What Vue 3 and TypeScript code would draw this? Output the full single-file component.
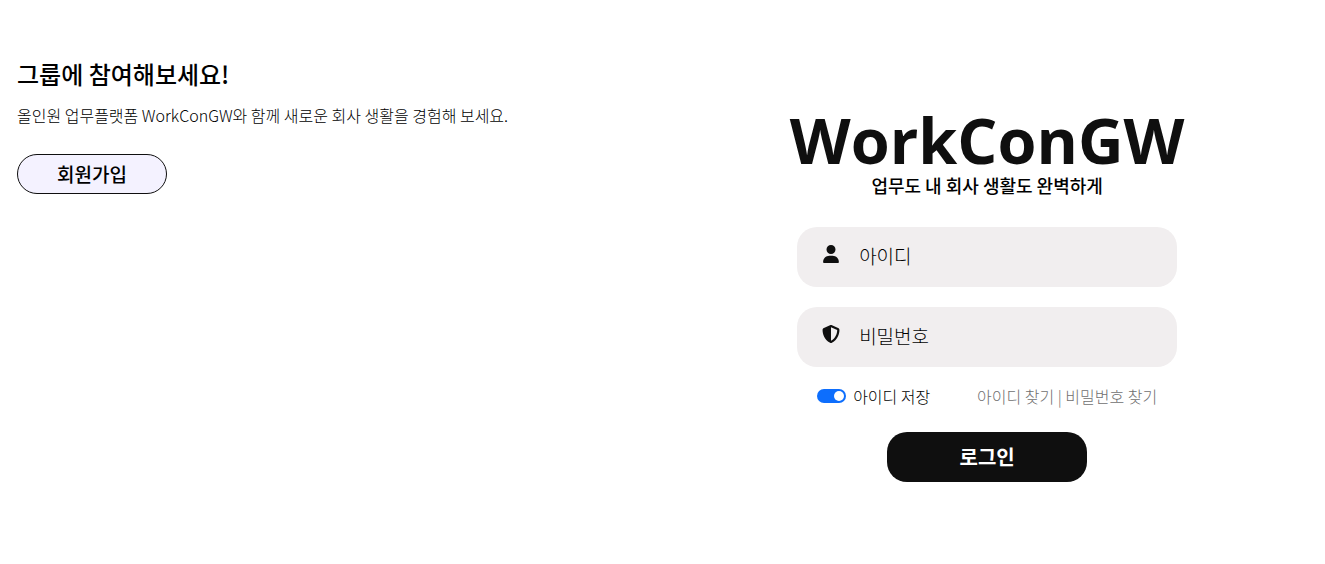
<script setup lang="ts">
import { ref } from 'vue'

const userId = ref('')
const password = ref('')
const rememberId = ref(true)
</script>

<template>
  <main class="page">
    <section class="join">
      <h2 class="join-title">그룹에 참여해보세요!</h2>
      <p class="join-text">올인원 업무플랫폼 WorkConGW와 함께 새로운 회사 생활을 경험해 보세요.</p>
      <button class="join-button" type="button">회원가입</button>
    </section>

    <form class="login" @submit.prevent>
      <h1 class="brand">WorkConGW</h1>
      <p class="tagline">업무도 내 회사 생활도 완벽하게</p>

      <div class="field">
        <label class="field-icon" for="user-id" aria-label="아이디">
          <svg viewBox="0 0 448 512" width="16" height="18" aria-hidden="true">
            <path d="M224 256A128 128 0 1 0 224 0a128 128 0 0 0 0 256zm-45.700 48C79.800 304 0 383.800 0 482.300 0 498.700 13.300 512 29.700 512h388.600c16.400 0 29.700-13.300 29.700-29.700C448 383.800 368.200 304 269.700 304z" />
          </svg>
        </label>
        <input id="user-id" v-model="userId" type="text" placeholder="아이디" />
      </div>

      <div class="field">
        <label class="field-icon" for="password" aria-label="비밀번호">
          <svg viewBox="0 0 512 512" width="18" height="18" aria-hidden="true">
            <path d="M256 0c4.600 0 9.200 1 13.400 2.900l188.300 79.900c22 9.300 38.400 31 38.300 57.200-.5 99.200-41.300 280.700-213.600 363.200-16.700 8-36.100 8-52.800 0C57.300 420.700 16.500 239.200 16 140c-.1-26.200 16.300-47.900 38.300-57.200L242.700 2.900C246.800 1 251.400 0 256 0zm0 66.800v378.100C394 378 431.100 230.100 432 141.400L256 66.800z" />
          </svg>
        </label>
        <input id="password" v-model="password" type="password" placeholder="비밀번호" />
      </div>

      <div class="options">
        <label class="remember" for="remember">
          <input id="remember" v-model="rememberId" class="switch" type="checkbox" role="switch" />
          <span>아이디 저장</span>
        </label>
        <nav class="find">
          <a href="#find-id">아이디 찾기</a> | <a href="#find-password">비밀번호 찾기</a>
        </nav>
      </div>

      <button class="login-button" type="submit">로그인</button>
    </form>
  </main>
</template>

<style>
body {
  margin: 0;
  background: #fff;
}
</style>

<style scoped>
.page {
  display: grid;
  grid-template-columns: 49fr 51fr;
  font-family: "Noto Sans CJK KR", sans-serif;
  font-size: 16px;
  font-weight: 300;
  line-height: 24px;
  color: #000;
}

h1,
h2,
p {
  margin: 0;
}

button,
input {
  box-sizing: border-box;
  font-family: inherit;
  color: inherit;
}

button {
  cursor: pointer;
}

.join {
  display: flex;
  flex-direction: column;
  align-items: flex-start;
  padding: 59px 17px;
}

.join-title {
  font-size: 24px;
  font-weight: 500;
  line-height: 30px;
}

.join-text {
  margin-top: 14px;
}

.join-button {
  width: 150px;
  height: 40px;
  margin-top: 27px;
  padding: 0 0 2px;
  border: 1px solid #0f0f0f;
  border-radius: 20px;
  background: #f4f2ff;
  font-size: 19px;
  font-weight: 500;
}

.login {
  display: flex;
  flex-direction: column;
  align-items: center;
  padding: 107px 0 80px;
}

.brand {
  color: #0f0f0f;
  font-family: "Open Sans", sans-serif;
  font-size: 63px;
  font-weight: 700;
  line-height: 66px;
}

.tagline {
  margin-bottom: 30px;
  font-size: 18px;
  font-weight: 500;
}

.field {
  display: flex;
  align-items: center;
  box-sizing: border-box;
  width: 380px;
  height: 60px;
  margin-bottom: 20px;
  padding: 0 25px;
  border-radius: 20px;
  background: #f1eeef;
}

.field-icon {
  display: flex;
  justify-content: center;
  width: 18px;
  margin-right: 19px;
  padding-bottom: 6px;
}

.field-icon svg {
  fill: #0f0f0f;
}

.field input {
  flex: 1;
  min-width: 0;
  height: 60px;
  padding: 0 0 4px;
  border: 0;
  outline: 0;
  background: transparent;
  font-size: 19px;
  font-weight: 300;
}

.field input::placeholder {
  color: #000;
  opacity: 1;
}

.options {
  display: flex;
  align-items: center;
  justify-content: space-between;
  box-sizing: border-box;
  width: 380px;
  margin-top: -3px;
  margin-bottom: 24px;
  padding: 0 20px;
}

.remember {
  display: flex;
  align-items: center;
  gap: 7px;
}

.switch {
  display: flex;
  align-items: center;
  width: 29px;
  height: 14px;
  margin: 0;
  padding: 0 2px;
  border-radius: 7px;
  background: #adb5bd;
  appearance: none;
}

.switch::before {
  width: 10px;
  height: 10px;
  border-radius: 50%;
  background: #fff;
  content: "";
}

.switch:checked {
  justify-content: flex-end;
  background: #0d6efd;
}

.find {
  color: #707070;
}

.find a {
  color: inherit;
  text-decoration: none;
}

.login-button {
  width: 200px;
  height: 50px;
  padding: 0 0 2px;
  border: 0;
  border-radius: 20px;
  background: #0f0f0f;
  color: #fff;
  font-size: 20px;
  font-weight: 700;
}
</style>
